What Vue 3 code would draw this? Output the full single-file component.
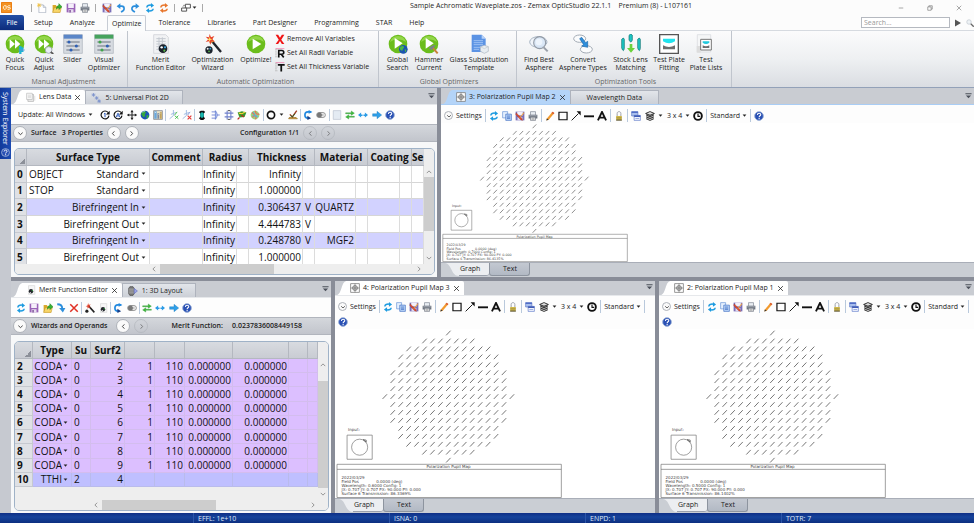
<script setup>
import { h } from 'vue'

const glyphs = {
  logo: '<rect width="16" height="16" rx="1" fill="#e8760c"/><rect x="1" y="1" width="14" height="14" fill="#f39325"/><path d="M7.5 5.5h-3l-1 1v3l1 1h2l1-1v-4M13.5 5.5h-3l-1 1v1l4 1v1l-1 1h-3" fill="none" stroke="#fff3dd" stroke-width="1.4"/>',
  file: '<path d="M3 3h7l4 4v8.500H3z" fill="#fff" stroke="#98a4b5"/><path d="M10 3v4h4" fill="none" stroke="#98a4b5"/><path d="M3 0v7M0 3.500h7M1 1l5 5M6 1L1 6" stroke="#f4c23c" stroke-width="1.200"/>',
  open: '<path d="M1 3h5l1.500 2H13v10H1z" fill="#d9a92c"/><path d="M1 15l3-8h11l-2 8z" fill="#f8d66a" stroke="#b98b1d" stroke-width=".7"/><path d="M7 10c0-4 2-6 4-6V1l5 5-5 4.500V7.500c-2 0-3 1-4 2.500z" fill="#35b233" stroke="#167a18" stroke-width=".8"/>',
  save: '<path d="M1 1h14v14H1z" fill="#9a63b8"/><path d="M3.500 1h9v7h-9z" fill="#f5effa"/><path d="M4 10h8v5H4z" fill="#e7dcef"/><path d="M5.500 11h2v4h-2z" fill="#6b3d8a"/>',
  saveAs: '<path d="M1 1h14v14H1z" fill="#7a6fb8"/><path d="M3.500 1h9v6h-9z" fill="#f3f0fa"/><path d="M4 10h8v5H4z" fill="#dcd7ef"/><path d="M2 3l9 9 1 3-3-1-8-9z" fill="#e04b2e" stroke="#8d2a18" stroke-width=".5"/><path d="M14 2L8 9l-1 2 2-1 6-7z" fill="#f3a33a"/>',
  print: '<path d="M4 1h8v6H4z" fill="#e9edf2" stroke="#777f8c"/><path d="M1 6h14v6H1z" fill="#6d747f"/><path d="M2 7h12v1.500H2z" fill="#aab0ba"/><path d="M4 10h8v5H4z" fill="#f4f6f8" stroke="#666d78"/><path d="M5.500 12h5M5.500 13.500h5" stroke="#999"/>',
  undo: '<path d="M4 5h5c3 0 4 2 4 4s-2 4-5 5.500" fill="none" stroke="#2d8fdc" stroke-width="2.600"/><path d="M1 5l6-4.500v9z" fill="#2d8fdc"/>',
  redo: '<path d="M12 5H7C4 5 3 7 3 9s2 4 5 5.500" fill="none" stroke="#2d8fdc" stroke-width="2.600"/><path d="M15 5L9 .5v9z" fill="#2d8fdc"/>',
  refresh: '<path d="M3 7c0-3 3-4 7-3.500" fill="none" stroke="#1d9be0" stroke-width="2.400"/><path d="M9.500 0l5 4-5 3.500z" fill="#1d9be0"/><path d="M13 9c0 3-3 4-7 3.500" fill="none" stroke="#1d9be0" stroke-width="2.400"/><path d="M6.500 16l-5-4 5-3.500z" fill="#1d9be0"/>',
  refreshAll: '<path d="M3 7c0-3 3-4 7-3.500" fill="none" stroke="#e8762c" stroke-width="2.400"/><path d="M9.500 0l5 4-5 3.500z" fill="#e8762c"/><path d="M13 9c0 3-3 4-7 3.500" fill="none" stroke="#e8762c" stroke-width="2.400"/><path d="M6.500 16l-5-4 5-3.500z" fill="#e8762c"/>',
  cascade: '<path d="M7 2h8v6H7z" fill="#fff" stroke="#555" stroke-width="1.600"/><path d="M1 8h8v5H1z" fill="#fff" stroke="#555" stroke-width="1.600"/><path d="M3 6l2-3 2 2" fill="none" stroke="#555"/>',
  caret: '<path d="M2 5h12l-6 7z" fill="#222"/>',
  chevDown: '<path d="M3 6l5 4.500L13 6" fill="none" stroke="#333" stroke-width="2"/>',
  chevLeft: '<path d="M10 3L5.500 8l4.500 5" fill="none" stroke="#333" stroke-width="2"/>',
  chevRight: '<path d="M6 3l4.500 5L6 13" fill="none" stroke="#333" stroke-width="2"/>',
  chevUp: '<path d="M2 11l6-6 6 6" fill="none" stroke="#777" stroke-width="2"/>',
  close: '<path d="M2.500 2.500l11 11M13.500 2.500l-11 11" stroke="#222" stroke-width="1.800"/>',
  stripMenu: '<path d="M1 3h14v2H1zM2 8h12l-6 6z" fill="#4b505a"/>',
  min: '<path d="M2 8h12" stroke="#666" stroke-width="1.500"/>',
  restore: '<path d="M2 5h9v9H2zM5 5V2h9v9h-3" fill="none" stroke="#666" stroke-width="1.500"/>',
  winClose: '<path d="M2 2l12 12M14 2L2 14" stroke="#666" stroke-width="1.500"/>',
  play: '<path d="M2 1l12 7-12 7z" fill="#555"/>',
  lens: '<circle cx="6" cy="6" r="4.500" fill="#eef2f5" stroke="#c3cad2" stroke-width="1.500"/><path d="M9.500 9.500l6 6" stroke="#666" stroke-width="2.500"/>',
  one: '<path d="M13 4A6.300 6.300 0 1 0 14.300 9" fill="none" stroke="#111" stroke-width="1.900"/><path d="M15.500 1v6h-6z" fill="#111"/><path d="M6.500 6.500L8 5v6.500" fill="none" stroke="#2857b8" stroke-width="1.600"/>',
  auto: '<path d="M13 4A6.300 6.300 0 1 0 14.300 9" fill="none" stroke="#111" stroke-width="1.900"/><path d="M15.500 1v6h-6z" fill="#111"/><path d="M5 11.500L8 5l3 6.500M6 9.500h4" fill="none" stroke="#2857b8" stroke-width="1.400"/>',
  move: '<path d="M8 1v14M1 8h14" stroke="#222" stroke-width="1.600"/><path d="M8 0l2.500 3.500h-5zM8 16l2.500-3.500h-5zM0 8l3.500-2.500v5zM16 8l-3.500-2.500v5z" fill="#222"/>',
  globe: '<circle cx="8" cy="8" r="7" fill="#1d55b5"/><path d="M3 4c3-3 5-2 7-1-1 3-3 3-2 5s-2 4-3 3-1-3-3-4zM11 8c2 0 3 1 3 2s-2 4-3 4 0-3-1-4z" fill="#36a83e"/><path d="M4 4c1-1 3-2 4-1.500" stroke="#bfe0ff" fill="none"/>',
  picture: '<path d="M1 1h14v14H1z" fill="#e8e2c8" stroke="#666c77"/><path d="M2 2h4v12H2z" fill="#6aa7dd"/><path d="M7 5h3v9H7z" fill="#7d8ba0"/><path d="M11 3h3v11h-3z" fill="#c2a35a"/><path d="M3 4h2M8 7h1M12 5h1" stroke="#fff"/>',
  axisGreen: '<path d="M7 0v9M1 14l6-5M3 7l8-3" stroke="#9db9e0" stroke-width="1.500"/><path d="M13 3l-4 5M9 9l6 5M15 9l-5 5" stroke="#44c04c" stroke-width="1.500"/>',
  axisRed: '<path d="M7 0v9M1 14l6-5M3 7l8-3" stroke="#9db9e0" stroke-width="1.500"/><path d="M13 3l-4 5" stroke="#8094d8" stroke-width="1.500"/><path d="M9 9l6 6M15 9l-6 6" stroke="#e23b38" stroke-width="1.800"/>',
  aperture: '<path d="M6 1h5l2 2-2 2v6l2 2-3 3H6l-3-3 2-2V5L3 3z" fill="#111"/><ellipse cx="8" cy="8" rx="3" ry="4.500" fill="#18b6ad"/>',
  rays: '<path d="M1 3h6M1 8h13M1 13h6" stroke="#7285d6" stroke-width="1.500"/><path d="M7 1q6 7 0 14z" fill="#c4d0f5" stroke="#4967c7"/>',
  frame: '<path d="M1 5h14M1 11h14M5 1v14M11 1v14" stroke="#6e7fca" stroke-width="1.700"/><path d="M6 1h4M6 15h4" stroke="#444" stroke-width="1.500"/>',
  surface3d: '<path d="M1 4l7-2 7 2-3 7-8 1z" fill="#39972c"/><path d="M3 5l5 1 5-3" stroke="#ffd836" stroke-width="1.800" fill="none"/><path d="M4 12l-3 3M7 8l4 3" stroke="#b62c22" stroke-width="2"/>',
  falseColor: '<circle cx="8" cy="8" r="7" fill="#9ed47a"/><path d="M3 4l4 3-3 5M8 1l2 5 5 1M9 15l1-5-4-1" stroke="#e76c5b" stroke-width="1.800" fill="none"/><path d="M5 3l6 9M13 10l-9-1" stroke="#4db6e6" stroke-width="1.500"/>',
  ring: '<circle cx="8" cy="8" r="5.800" fill="none" stroke="#111" stroke-width="2.600"/>',
  check: '<path d="M2 12h11l2 2H1z" fill="#d8a33a" stroke="#8d6516"/><path d="M3 7l4 4 7-10" fill="none" stroke="#a03a20" stroke-width="2.200"/><path d="M4 9l3 2 4-5" stroke="#226b2a" fill="none" stroke-width="1.500"/>',
  hook: '<path d="M13 3H8C4 3 3 5 3 8s2 5 5 5" fill="none" stroke="#2289e0" stroke-width="2.600"/><path d="M7 9l6 4-6 3z" fill="#173d85"/><path d="M9 0l6 3-6 3z" fill="#2289e0"/>',
  toggle: '<rect x="1" y="4" width="14" height="8" rx="4" fill="#f5f5f5" stroke="#777" stroke-width="1.200"/><circle cx="5.500" cy="8" r="4" fill="#777"/><path d="M11 6v4" stroke="#777"/>',
  sheet: '<path d="M2 1h12v14H2z" fill="#e4ebf3" stroke="#b3becb"/>',
  swap: '<path d="M1 4.500h9V1.500l5 3.500-5 3.500V6H1zM15 11.500H6v3L1 11l5-3.500V10h9z" fill="#3dbb3a" stroke="#23872a" stroke-width=".5"/>',
  spread: '<path d="M0 8l5-4v3h6V4l5 4-5 4V9.500H5V12z" fill="#2a9be6"/><path d="M8 6v4" stroke="#fff" stroke-width="1.500"/>',
  right: '<path d="M1 6h7V2l7.500 6L8 14v-4H1z" fill="#2f9fe8" stroke="#1775ba" stroke-width=".6"/>',
  help: '<circle cx="8" cy="8" r="7" fill="#2950b4" stroke="#9fb3d9" stroke-width="1.500"/><path d="M5.500 6.200c0-3.400 5.300-3.200 5.300-.4C10.800 7.700 8.200 7.600 8.200 9.800M8.200 11v2" fill="none" stroke="#fff" stroke-width="1.700"/>',
  copy: '<path d="M1 1h8v10H1z" fill="#e6f0fd" stroke="#5c8ad4"/><path d="M6 5h9v10H6z" fill="#b9d3f8" stroke="#3767bd"/><path d="M8 8h5M8 10h5M8 12h5" stroke="#3767bd"/>',
  pencil: '<path d="M3 12L12 1l3 2-9 11-4 1z" fill="#f29a2e"/><path d="M12 1l3 2-1.500 2-3-2z" fill="#d85b3a"/><path d="M3 12l3 2-4 1z" fill="#333"/>',
  rect: '<path d="M1.500 2h13v12h-13z" fill="none" stroke="#111" stroke-width="1.900"/>',
  arrow: '<path d="M1 15L12 4" stroke="#111" stroke-width="1.500"/><path d="M15.500.5v6.500L9 .5z" fill="#111"/>',
  line: '<path d="M0 8.500h16" stroke="#111" stroke-width="3"/>',
  letter: '<path d="M1.500 15L8 1.500 14.500 15M4 10.500h8" fill="none" stroke="#111" stroke-width="3"/>',
  lock: '<path d="M5 9V4c0-4 6-4 6 0v5" fill="none" stroke="#9da2aa" stroke-width="1.600"/><path d="M3.500 8h9v7h-9z" fill="#d0b848"/><path d="M3.500 11h9" stroke="#8a7c3a" stroke-width="1"/><path d="M3.500 14.500h9" stroke="#44423a" stroke-width="1.500"/>',
  clone: '<path d="M1 1h10v7H1z" fill="#aac0ee" stroke="#5572c5"/><path d="M1 1h10v2H1z" fill="#4763c1"/><path d="M5 7h10v8H5z" fill="#f2f5fd" stroke="#5572c5"/><path d="M5 7h10v2.500H5z" fill="#3552b0"/><path d="M7 12h6" stroke="#6d87d1"/>',
  layers: '<path d="M8 1l7 3-7 3-7-3zM2 6.500l6 2.500 6-2.500M2 9.500L8 12l6-2.500M2 12.500L8 15l6-2.500" fill="#fff" stroke="#222" stroke-width="1.500"/><path d="M2 4h12v9H2z" fill="#333" opacity=".35"/>',
  clock: '<circle cx="8" cy="8" r="6.200" fill="#fff" stroke="#111" stroke-width="3"/><path d="M8 4v4.500h3.500" fill="none" stroke="#111" stroke-width="1.800"/>',
  pageIcon: '<path d="M3 4h9v11H3z" fill="#eee" stroke="#a5a5a5"/><path d="M1 2h9v10H1z" fill="#fafafa" stroke="#b5b5b5"/><path d="M3 5h5M3 7h5M3 9h5" stroke="#ccc"/><path d="M12 5v10M14 6v8" stroke="#cfcfcf"/>',
  scatter: '<g stroke="#7d93cd" stroke-width="1.300"><path d="M4 0v6M1 3h6M2 1l4 4M6 1L2 5M9 5v6M6 8h6M7 6l4 4M11 6L7 10M13 10v6M10 13h6M11 11l4 4M15 11l-4 4"/></g>',
  pupil: '<path d="M1 1h14v14H1z" fill="#fff" stroke="#777" stroke-width="1.200"/><circle cx="8" cy="8" r="4" fill="#c9c9c9" stroke="#666"/><path d="M8 1v14M1 8h14" stroke="#666"/>',
  merit: '<path d="M4 1h10v14H4z" fill="#f6f6f6" stroke="#d4d4d4"/><circle cx="8" cy="10" r="3.500" fill="#23262c"/><circle cx="10" cy="9" r="1" fill="#39b14a"/><circle cx="7" cy="12" r="1" fill="#ddd"/>',
  layout3d: '<path d="M3 1h5l2 3v8l-2 3H3L1 12V4z" fill="#777" stroke="#444"/><path d="M1 5h9M1 8h14M1 11h9" stroke="#ccc"/><path d="M10 4l5 4-5 4z" fill="#9aa4e6" stroke="#6570c2"/>',
  insert: '<path d="M2 2c5 0 8 3 8 7" fill="none" stroke="#2d8fdc" stroke-width="3"/><path d="M5 8h10l-4 7z" fill="#2d8fdc"/>',
  del: '<path d="M2 2l12 12M14 2L2 14" stroke="#e03024" stroke-width="2.400"/>',
  wand: '<path d="M6 5l9 10" stroke="#222" stroke-width="2.400"/><path d="M5 0l1 3 3-1-2 3 2 3-3-1-2 2V6L1 5l3-1z" fill="#e0402b"/><circle cx="3" cy="13" r="2.500" fill="#222"/>',
  quickFocus: '<circle cx="15" cy="15" r="14" fill="#6bbd1c"/><path d="M3 12a12.500 12.500 0 0 1 24 0c-7-5-17-5-24 0" fill="#93d64a"/><path d="M7 8l8 7-8 7zM15 8l8 7-8 7z" fill="#fff"/><path d="M23 18v12M26 20v7" stroke="#1eb2d4" stroke-width="3.500"/><path d="M20 24h10" stroke="#6a8bd2"/>',
  quickAdjust: '<circle cx="15" cy="15" r="14" fill="#6bbd1c"/><path d="M3 12a12.500 12.500 0 0 1 24 0c-7-5-17-5-24 0" fill="#93d64a"/><path d="M7 8l8 7-8 7zM15 8l8 7-8 7z" fill="#fff"/><circle cx="22" cy="24" r="5" fill="#e9eef5" stroke="#a7adb6" stroke-width="1.500"/><path d="M25 27l4 3" stroke="#555" stroke-width="2.500"/>',
  slider: '<path d="M1 1h28v28H1z" fill="#d7dbe1" stroke="#a9b0ba"/><path d="M1 1h28v6H1z" fill="#5b86c8"/><path d="M5 12h20M5 18h20M5 24h20" stroke="#6c7480" stroke-width="1.800"/><circle cx="9" cy="12" r="2.300" fill="#2e5fb4"/><circle cx="20" cy="18" r="2.300" fill="#2e5fb4"/><circle cx="12" cy="24" r="2.300" fill="#2e5fb4"/>',
  visual: '<path d="M1 1h28v28H1z" fill="#d7dbe1" stroke="#a9b0ba"/><path d="M1 1h28v6H1z" fill="#46a35d"/><path d="M5 12h20M5 18h20M5 24h20" stroke="#6c7480" stroke-width="1.800"/><circle cx="9" cy="12" r="2.300" fill="#3fa648"/><circle cx="20" cy="18" r="2.300" fill="#2e5fb4"/><circle cx="12" cy="24" r="2.300" fill="#3fa648"/>',
  meritBig: '<path d="M4 1h18l4 4v24H4z" fill="#f1f2f4" stroke="#c8ccd2"/><path d="M8 7h14M8 11h14M8 15h14M8 19h14M8 23h14M12 5v20M17 5v20" stroke="#c3c8cf" stroke-width="1.500"/><circle cx="18" cy="22" r="6.500" fill="#1c232d"/><circle cx="16" cy="20" r="1.800" fill="#fff"/><circle cx="21" cy="20" r="1.600" fill="#3aa9e0"/><circle cx="20" cy="25" r="1.600" fill="#58b947"/>',
  wandBig: '<path d="M12 9l15 18" stroke="#20242c" stroke-width="3.500"/><path d="M11 7l4 5" stroke="#f3b13c" stroke-width="4"/><path d="M10 0l2 5 5-2-3 5 4 4-5-1-2 5-2-5-5 1 4-4-4-4 5 1z" fill="#e7442b"/><path d="M10 4l1 3 3 1-3 1-1 3-1-3-3-1 3-1z" fill="#ffe36b"/><circle cx="9" cy="24" r="5.500" fill="#1c232d"/><circle cx="7" cy="22" r="1.500" fill="#eee"/><circle cx="11" cy="22" r="1.400" fill="#3aa9e0"/><circle cx="9" cy="26" r="1.300" fill="#58b947"/>',
  optimize: '<circle cx="15" cy="15" r="14" fill="#6bbd1c"/><path d="M3 12a12.500 12.500 0 0 1 24 0c-7-5-17-5-24 0" fill="#93d64a"/><path d="M10 7l13 8-13 8z" fill="#fff"/>',
  globalSearch: '<circle cx="15" cy="15" r="14" fill="#6bbd1c"/><path d="M3 12a12.500 12.500 0 0 1 24 0c-7-5-17-5-24 0" fill="#93d64a"/><path d="M10 6l12 8-12 8z" fill="#fff"/><circle cx="23" cy="23" r="6.500" fill="#1c54b0"/><path d="M18 20c3-3 5-2 6-1s-2 3-2 5-3 1-4-1zM25 23c3 0 3 2 1 5z" fill="#46b54a"/>',
  hammer: '<circle cx="15" cy="15" r="14" fill="#6bbd1c"/><path d="M3 12a12.500 12.500 0 0 1 24 0c-7-5-17-5-24 0" fill="#93d64a"/><path d="M10 6l12 8-12 8z" fill="#fff"/><path d="M20 20l8 9" stroke="#c9803b" stroke-width="3"/><path d="M15 22c2-4 6-6 10-5l-6 7z" fill="#7b818a"/>',
  glass: '<path d="M4 1h15l6 6v20H4z" fill="#5b93e4"/><path d="M19 1v6h6z" fill="#b8d2f8"/><path d="M7 10h14M7 13h14M7 16h14M7 20h10M7 23h8" stroke="#9dc0f3" stroke-width="1.500"/><path d="M17 19l6-2 6 2v7l-6 3-6-3z" fill="#e8edf2" stroke="#aab4bf"/><path d="M17 19l6 3 6-3" fill="none" stroke="#c1c8cf"/>',
  findAsphere: '<ellipse cx="14" cy="12" rx="13" ry="8" fill="#f1f5fa" stroke="#a9b6c5" stroke-width="1.500"/><circle cx="16" cy="13" r="9" fill="#d4e3f5" fill-opacity=".8" stroke="#929aa5" stroke-width="1.700"/><circle cx="15" cy="12" r="5" fill="#edf4fc"/><path d="M22 20l6 6" stroke="#999fa8" stroke-width="3"/>',
  convert: '<ellipse cx="10" cy="7" rx="9" ry="5.500" fill="#fbfcfd" stroke="#a3abb5" stroke-width="1.500"/><ellipse cx="20" cy="23" rx="9" ry="5.500" fill="#fbfcfd" stroke="#a3abb5" stroke-width="1.500"/><path d="M10 7l3-2 6 8 3-2v9l-9-2 3-2z" fill="#2f8fdc" stroke="#1c67a8"/>',
  stock: '<path d="M1 8q3-4 4 0v13q-1 8-4 0zM25 8q3-4 4 0v13q-1 8-4 0z" fill="#1cc6c4" stroke="#12716f"/><path d="M12 2q3-4 5 0v7q-2 6-5 0z" fill="#1cc6c4" stroke="#12716f"/><path d="M13 15h4v6h4l-6 7-6-7h4z" fill="#6bd23c"/>',
  plate: '<path d="M1 1h28v28H1z" fill="#fff" stroke="#555" stroke-width="2"/><path d="M6 7h18v4q-9 6-18 0z" fill="#21e3ee"/><path d="M6 17q9 5 18 0v6H6z" fill="#6d6d6d"/>',
  plates: '<path d="M2 1h20v26H2z" fill="#f5f6f7" stroke="#d5d8dc"/><path d="M1 18h6v10H1z" fill="#ddd"/><path d="M7 8h16v16H7z" fill="#fff" stroke="#777" stroke-width="1.500"/><path d="M10 11h10v2q-5 4-10 0z" fill="#21c9dd"/><path d="M10 17q5 3 10 0v4H10z" fill="#6d6d6d"/>',
  removeAll: '<path d="M2 1h4l3 5 3-5h4l-5 8 5 7h-4l-3-5-3 5H2l5-7z" fill="#f01414" transform="translate(-1)"/>',
  radii: '<path d="M0 2h4M0 5h3M0 8h4M0 11h3M0 14h4" stroke="#aaa"/><path d="M1 1h14" stroke="#e48" stroke-width=".8"/><path d="M6 15V4h5q3 0 3 3t-3 3H7M10 10l4 5" fill="none" stroke="#111" stroke-width="2.600"/>',
  thick: '<path d="M0 2h4M0 5h3M0 8h4M0 11h3M0 14h4" stroke="#aaa"/><path d="M1 1h14" stroke="#e48" stroke-width=".8"/><path d="M4.500 4.500h11M10 4.500V15" fill="none" stroke="#111" stroke-width="2.800"/>'
}

const Icon = (props) =>
  h('svg', {
    class: 'icon',
    viewBox: props.big ? '0 0 30 30' : '0 0 16 16',
    'aria-hidden': 'true',
    innerHTML: glyphs[props.name]
  })
Icon.props = { name: String, big: Boolean }

const quickTools = [
  '|', ['file', 'New'], ['open', 'Open'], ['save', 'Save'], ['print', 'Print'], '|',
  ['saveAs', 'Save As'], ['undo', 'Undo'], ['redo', 'Redo'], ['refresh', 'Update'],
  ['refreshAll', 'Update All'], '|', ['cascade', 'Window Options'], '|'
]

const menus = ['File', 'Setup', 'Analyze', 'Optimize', 'Tolerance', 'Libraries', 'Part Designer', 'Programming', 'STAR', 'Help']

const ribbon = [
  {
    key: 'manual', label: 'Manual Adjustment',
    items: [['quickFocus', 'Quick', 'Focus'], ['quickAdjust', 'Quick', 'Adjust'], ['slider', 'Slider', ''], ['visual', 'Visual', 'Optimizer']]
  },
  {
    key: 'automatic', label: 'Automatic Optimization',
    items: [['meritBig', 'Merit', 'Function Editor'], ['wandBig', 'Optimization', 'Wizard'], ['optimize', 'Optimize!', '']],
    list: [['removeAll', 'Remove All Variables'], ['radii', 'Set All Radii Variable'], ['thick', 'Set All Thickness Variable']]
  },
  {
    key: 'global', label: 'Global Optimizers',
    items: [['globalSearch', 'Global', 'Search'], ['hammer', 'Hammer', 'Current'], ['glass', 'Glass Substitution', 'Template']]
  },
  {
    key: 'lens-tools-group', label: 'Optimization Tools',
    items: [['findAsphere', 'Find Best', 'Asphere'], ['convert', 'Convert', 'Asphere Types'], ['stock', 'Stock Lens', 'Matching'], ['plate', 'Test Plate', 'Fitting'], ['plates', 'Test', 'Plate Lists']]
  }
]

const lensTools = ['one', 'auto', 'move', 'globe', 'picture', '|', 'axisGreen', 'axisRed', '|', 'aperture', 'rays', 'frame', 'surface3d', 'falseColor', '|', 'ring', 'caret', 'check', '|', 'hook', 'toggle', '|', 'sheet', 'swap', 'spread', 'right', 'help']
const meritTools = ['refresh', 'save', 'open', 'insert', 'del', '|', 'wand', 'merit', '|', 'hook', 'toggle', '|', 'swap', 'spread', 'right', 'help']

const lensRows = [
  ['OBJECT', 'Standard', 'Infinity', '', ''],
  ['STOP', 'Standard', '1.000000', '', ''],
  ['', 'Birefringent In', '0.306437', 'V', 'QUARTZ'],
  ['', 'Birefringent Out', '4.444783', 'V', ''],
  ['', 'Birefringent In', '0.248780', 'V', 'MGF2'],
  ['', 'Birefringent Out', '1.000000', '', '']
]

const meritRows = [2, 3, 4, 5, 6, 7, 8, 9].map((n) => [n, 'CODA', '0', n, '1', '110', '0.000000', '0.000000'])
meritRows.push([10, 'TTHI', '2', 4, '', '', '', ''])

const upper = [{ id: 'map3', tab: '3: Polarization Pupil Map 2', other: 'Wavelength Data', wave: '0.7000', trans: '86.4135%' }]
const lower = [
  { id: 'map4', tab: '4: Polarization Pupil Map 3', wave: '0.6000', trans: '86.3369%' },
  { id: 'map2', tab: '2: Polarization Pupil Map 1', wave: '0.5000', trans: '86.1402%' }
]

const pitch = 7.9
const marks = []
for (let j = -8; j <= 8; j++) {
  for (let i = -8; i <= 8; i++) {
    if (i * i + j * j <= 64) marks.push(`M${(109.5 + i * pitch).toFixed(1)} ${(69.5 + j * pitch).toFixed(1)}l4.400-4.600`)
  }
}
const markPath = marks.join('')

const status = ['', 'EFFL: 1e+10', 'ISNA: 0', 'ENPD: 1', 'TOTR: 7']
</script>

<template>
  <div class="app">
    <header class="titlebar">
      <Icon name="logo" class="logo" />
      <div class="quick">
        <template v-for="(t, i) in quickTools" :key="i">
          <i v-if="t === '|'" class="sep"></i>
          <button v-else class="tool" :aria-label="t[1]"><Icon :name="t[0]" /><Icon v-if="t[0] === 'cascade'" name="caret" class="caret" /></button>
        </template>
      </div>
      <h1>Sample Achromatic Waveplate.zos - Zemax OpticStudio 22.1.1 &nbsp;&nbsp; Premium (8) - L107161</h1>
      <div class="window-controls">
        <button aria-label="Minimize"><Icon name="min" /></button>
        <button aria-label="Restore"><Icon name="restore" /></button>
        <button aria-label="Close"><Icon name="winClose" /></button>
      </div>
    </header>

    <nav class="menubar">
      <button v-for="m in menus" :key="m" class="menu" :class="{ file: m === 'File', active: m === 'Optimize' }">{{ m }}</button>
      <div class="search">
        <input type="search" placeholder="Search..." aria-label="Search" />
        <button aria-label="Next result"><Icon name="play" /></button>
        <button aria-label="Find"><Icon name="lens" /></button>
      </div>
    </nav>

    <section class="ribbon">
      <div v-for="g in ribbon" :key="g.key" class="group" :class="g.key">
        <div class="group-items">
          <button v-for="b in g.items" :key="b[0]" class="big">
            <Icon :name="b[0]" big />
            <span>{{ b[1] }}</span><span>{{ b[2] }}</span>
          </button>
          <div v-if="g.list" class="list">
            <button v-for="l in g.list" :key="l[0]"><Icon :name="l[0]" />{{ l[1] }}</button>
          </div>
        </div>
        <div class="group-label">{{ g.label }}</div>
      </div>
    </section>

    <main class="workspace">
      <aside class="rail">
        <button><span>System Explorer</span><Icon name="help" /></button>
      </aside>

      <div class="docks">
        <div class="dock-row upper">
          <section class="panel">
            <div class="strip">
              <button class="tab active">
                <svg class="slant" viewBox="0 0 10 14" preserveAspectRatio="none" aria-hidden="true"><path d="M0 14C5 13 4 0 10 0V14z" /></svg>
                <Icon name="pageIcon" />Lens Data<Icon name="close" class="close" />
              </button>
              <button class="tab"><Icon name="scatter" />5: Universal Plot 2D</button>
              <button class="strip-menu" aria-label="Window list"><Icon name="stripMenu" /></button>
            </div>
            <div class="toolbar editor">
              <label class="pick update"><select aria-label="Update"><option>Update: All Windows</option></select><Icon name="caret" class="caret" /></label>
              <div class="tools lens-tools">
                <template v-for="(t, i) in lensTools" :key="i">
                  <i v-if="t === '|'" class="sep"></i>
                  <button v-else class="tool" :aria-label="t"><Icon :name="t" :class="{ caret: t === 'caret' }" /></button>
                </template>
              </div>
            </div>
            <div class="props">
              <button class="round" aria-label="Expand"><Icon name="chevDown" /></button>
              <b>Surface &nbsp; 3 Properties</b>
              <button class="round" aria-label="Previous surface"><Icon name="chevLeft" /></button>
              <button class="round" aria-label="Next surface"><Icon name="chevRight" /></button>
              <b class="config">Configuration 1/1</b>
              <button class="round dim" aria-label="Previous configuration"><Icon name="chevLeft" /></button>
              <button class="round dim" aria-label="Next configuration"><Icon name="chevRight" /></button>
            </div>
            <div class="sheet-wrap">
              <div class="sheet">
                <div class="grid-area">
                  <table class="lens">
                    <colgroup><col class="c-num" /><col class="c-type" /><col class="c-comment" /><col class="c-rad" /><col class="c-flag" /><col class="c-thick" /><col class="c-flag" /><col class="c-mat" /><col class="c-flag" /><col class="c-coat" /><col class="c-flag" /><col class="c-flag" /></colgroup>
                    <thead>
                      <tr><th class="corner"></th><th>Surface Type</th><th>Comment</th><th colspan="2">Radius</th><th colspan="2">Thickness</th><th colspan="2">Material</th><th colspan="2">Coating</th><th class="cut">Se</th></tr>
                    </thead>
                    <tbody>
                      <tr v-for="(r, i) in lensRows" :key="i" :class="{ tint: i === 2 || i === 4 }">
                        <th scope="row">{{ i }}</th>
                        <td>
                          <div class="type-cell"><span>{{ r[0] }}</span><label class="pick"><select :aria-label="'Surface type ' + i"><option>{{ r[1] }}</option></select><Icon name="caret" class="caret" /></label></div>
                        </td>
                        <td></td><td>Infinity</td><td></td><td>{{ r[2] }}</td><td class="flag">{{ r[3] }}</td><td>{{ r[4] }}</td><td></td><td></td><td></td><td></td>
                      </tr>
                    </tbody>
                  </table>
                  <div class="vbar"><Icon name="chevUp" /><i class="thumb"></i><Icon name="chevUp" class="flip" /></div>
                </div>
                <div class="hbar lens-bar"><Icon name="chevUp" class="turn-left" /><i class="thumb"></i><Icon name="chevUp" class="turn-right" /></div>
              </div>
            </div>
          </section>
          <section v-for="m in upper" :key="m.id" class="panel">
            <div class="strip blue">
              <button class="tab active">
                <svg class="slant" viewBox="0 0 10 14" preserveAspectRatio="none" aria-hidden="true"><path d="M0 14C5 13 4 0 10 0V14z" /></svg>
                <Icon name="pupil" />{{ m.tab }}<Icon name="close" class="close" />
              </button>
              <button class="tab wide">{{ m.other }}</button>
              <button class="strip-menu" aria-label="Window list"><Icon name="stripMenu" /></button>
            </div>
            <div class="toolbar graph">
              <button class="settings"><span class="round small"><Icon name="chevDown" /></span>Settings</button>
              <i class="sep"></i>
              <button v-for="t in ['refresh', 'copy', 'saveAs', 'print']" :key="t" class="tool" :aria-label="t"><Icon :name="t" /></button>
              <i class="sep"></i>
              <button v-for="t in ['pencil', 'rect', 'arrow', 'line', 'letter']" :key="t" class="tool" :aria-label="t"><Icon :name="t" /></button>
              <i class="sep"></i>
              <button class="tool" aria-label="Lock"><Icon name="lock" /></button>
              <i class="sep"></i>
              <button class="tool" aria-label="Clone"><Icon name="clone" /></button>
              <button class="menu-tool" aria-label="Layers"><Icon name="layers" /><Icon name="caret" class="caret" /></button>
              <button class="menu-tool">3 x 4<Icon name="caret" class="caret" /></button>
              <button class="tool" aria-label="Reset"><Icon name="clock" /></button>
              <i class="sep"></i>
              <label class="pick"><select aria-label="Line style"><option>Standard</option></select><Icon name="caret" class="caret" /></label>
              <i class="sep"></i>
              <button class="tool" aria-label="Help"><Icon name="help" /></button>
            </div>
            <div class="plot">
              <svg viewBox="0 0 224 168" preserveAspectRatio="xMinYMax meet" role="img" aria-label="Polarization Pupil Map">
                <path :d="markPath" class="ink" />
                <text x="12" y="101">Input:</text>
                <path class="thin" d="M11 105.500h25v24H11z" /><circle class="thin" cx="23.500" cy="117.500" r="8" /><path class="ink" d="M27 110l3 2.500v-2z" />
                <path class="thin" d="M1 134.500h223v33H1zM1 139.500h223" />
                <text x="90" y="138.500">Polarization Pupil Map</text>
                <text x="5.500" y="149">2022/03/29</text>
                <text x="5.500" y="153">Field Pos</text><text x="40" y="153">0.0000 (deg)</text>
                <text x="5.500" y="157">Wavelength:  {{ m.wave }}  Config: 1</text>
                <text x="5.500" y="161">JX:  0.707 JY:  0.707 PX: 90.000 PY:   0.000</text>
                <text x="5.500" y="165.500">Surface 6 Transmission: {{ m.trans }}</text>
              </svg>
            </div>
            <div class="sheet-tabs">
              <button class="graph-tab"><svg class="slant" viewBox="0 0 14 14" preserveAspectRatio="none" aria-hidden="true"><path d="M0 0C7 1 6 14 14 14V0z" /></svg>Graph</button>
              <button class="text-tab">Text</button>
            </div>
          </section>
        </div>

        <div class="dock-row lower">
          <section class="panel">
            <div class="strip">
              <button class="tab active">
                <svg class="slant" viewBox="0 0 10 14" preserveAspectRatio="none" aria-hidden="true"><path d="M0 14C5 13 4 0 10 0V14z" /></svg>
                <Icon name="merit" />Merit Function Editor<Icon name="close" class="close" />
              </button>
              <button class="tab"><Icon name="layout3d" />1: 3D Layout</button>
              <button class="strip-menu" aria-label="Window list"><Icon name="stripMenu" /></button>
            </div>
            <div class="toolbar editor">
              <div class="tools merit-tools">
                <template v-for="(t, i) in meritTools" :key="i">
                  <i v-if="t === '|'" class="sep"></i>
                  <button v-else class="tool" :aria-label="t"><Icon :name="t" /></button>
                </template>
              </div>
            </div>
            <div class="props">
              <button class="round" aria-label="Expand"><Icon name="chevDown" /></button>
              <b class="wizards">Wizards and Operands</b>
              <button class="round" aria-label="Previous operand"><Icon name="chevLeft" /></button>
              <button class="round dim" aria-label="Next operand"><Icon name="chevRight" /></button>
              <b class="score">Merit Function:</b><b>0.0237836008449158</b>
            </div>
            <div class="sheet-wrap">
              <div class="sheet">
                <div class="grid-area">
                  <div class="table-box">
                    <table class="merit">
                      <colgroup><col class="m-num" /><col class="m-type" /><col class="m-su" /><col class="m-surf" /><col class="m-one" /><col class="m-one" /><col class="m-val" /><col class="m-val2" /><col class="m-su" /><col /></colgroup>
                      <thead>
                        <tr><th class="corner"></th><th>Type</th><th>Su</th><th>Surf2</th><th></th><th></th><th></th><th></th><th></th><th></th></tr>
                      </thead>
                      <tbody>
                        <tr v-for="r in meritRows" :key="r[0]" :class="r[1] === 'CODA' ? 'violet' : 'periwinkle'">
                          <th scope="row">{{ r[0] }}</th>
                          <td><label class="pick"><select :aria-label="'Operand ' + r[0]"><option>{{ r[1] }}</option></select><Icon name="caret" class="caret" /></label></td>
                          <td class="left">{{ r[2] }}</td><td>{{ r[3] }}</td><td>{{ r[4] }}</td><td>{{ r[5] }}</td><td>{{ r[6] }}</td><td>{{ r[7] }}</td><td></td><td></td>
                        </tr>
                      </tbody>
                    </table>
                  </div>
                  <div class="vbar merit-vbar"><Icon name="chevUp" /><i class="thumb"></i><Icon name="chevUp" class="flip" /></div>
                </div>
                <div class="hbar merit-bar"><Icon name="chevUp" class="turn-left" /><i class="thumb"></i><Icon name="chevUp" class="turn-right" /></div>
              </div>
            </div>
          </section>
          <section v-for="m in lower" :key="m.id" class="panel">
            <div class="strip short">
              <button class="tab active">
                <svg class="slant" viewBox="0 0 10 14" preserveAspectRatio="none" aria-hidden="true"><path d="M0 14C5 13 4 0 10 0V14z" /></svg>
                <Icon name="pupil" />{{ m.tab }}<Icon name="close" class="close" />
              </button>
              <button class="strip-menu" aria-label="Window list"><Icon name="stripMenu" /></button>
            </div>
            <div class="toolbar graph">
              <button class="settings"><span class="round small"><Icon name="chevDown" /></span>Settings</button>
              <i class="sep"></i>
              <button v-for="t in ['refresh', 'copy', 'saveAs', 'print']" :key="t" class="tool" :aria-label="t"><Icon :name="t" /></button>
              <i class="sep"></i>
              <button v-for="t in ['pencil', 'rect', 'arrow', 'line', 'letter']" :key="t" class="tool" :aria-label="t"><Icon :name="t" /></button>
              <i class="sep"></i>
              <button class="tool" aria-label="Lock"><Icon name="lock" /></button>
              <i class="sep"></i>
              <button class="tool" aria-label="Clone"><Icon name="clone" /></button>
              <button class="menu-tool" aria-label="Layers"><Icon name="layers" /><Icon name="caret" class="caret" /></button>
              <button class="menu-tool">3 x 4<Icon name="caret" class="caret" /></button>
              <button class="tool" aria-label="Reset"><Icon name="clock" /></button>
              <i class="sep"></i>
              <label class="pick"><select aria-label="Line style"><option>Standard</option></select><Icon name="caret" class="caret" /></label>
              <i class="sep"></i>
              <button class="tool" aria-label="Help"><Icon name="help" /></button>
            </div>
            <div class="plot">
              <svg viewBox="0 0 224 168" preserveAspectRatio="xMinYMax meet" role="img" aria-label="Polarization Pupil Map">
                <path :d="markPath" class="ink" />
                <text x="12" y="101">Input:</text>
                <path class="thin" d="M11 105.500h25v24H11z" /><circle class="thin" cx="23.500" cy="117.500" r="8" /><path class="ink" d="M27 110l3 2.500v-2z" />
                <path class="thin" d="M1 134.500h223v33H1zM1 139.500h223" />
                <text x="90" y="138.500">Polarization Pupil Map</text>
                <text x="5.500" y="149">2022/03/29</text>
                <text x="5.500" y="153">Field Pos</text><text x="40" y="153">0.0000 (deg)</text>
                <text x="5.500" y="157">Wavelength:  {{ m.wave }}  Config: 1</text>
                <text x="5.500" y="161">JX:  0.707 JY:  0.707 PX: 90.000 PY:   0.000</text>
                <text x="5.500" y="165.500">Surface 6 Transmission: {{ m.trans }}</text>
              </svg>
            </div>
            <div class="sheet-tabs">
              <button class="graph-tab"><svg class="slant" viewBox="0 0 14 14" preserveAspectRatio="none" aria-hidden="true"><path d="M0 0C7 1 6 14 14 14V0z" /></svg>Graph</button>
              <button class="text-tab">Text</button>
            </div>
          </section>
        </div>
      </div>
    </main>

    <footer class="status"><span v-for="(s, i) in status" :key="i">{{ s }}</span></footer>
  </div>
</template>

<style>
body { margin: 0; }
</style>

<style scoped>
.app { height: 100vh; min-height: 400px; display: flex; flex-direction: column; overflow: hidden; background: #fcfcfc; color: #1c1c1c; font: 7px/8px "Open Sans", "Noto Sans", sans-serif; }
.app * { box-sizing: border-box; }
button, select, input { font: inherit; color: inherit; background: none; border: 0; padding: 0; margin: 0; }
button { display: flex; align-items: center; white-space: nowrap; flex: none; }
select { appearance: none; outline: 0; }
.icon { width: 10px; height: 10px; flex: none; display: block; }
.icon.caret { width: 5px; height: 5px; }
.sep { width: 1px; height: 12px; background: #b9c9dc; flex: none; }
.pick { display: flex; align-items: center; gap: 2px; }

.titlebar { display: flex; height: 15px; flex: none; align-items: center; padding-left: 1px; }
.titlebar .logo { width: 11px; height: 11px; }
.quick { display: flex; align-items: center; justify-content: space-between; width: 174px; margin-left: 18px; }
.quick .sep { height: 8px; background: #aaa; margin: 0 1px; }
.quick .caret { margin-left: 1px; }
h1 { flex: 1; margin: 0; font-size: 7px; font-weight: 400; text-align: center; line-height: 12px; align-self: flex-start; }
.window-controls { display: flex; gap: 23px; padding-right: 12px; align-self: center; }
.window-controls .icon { width: 6px; height: 10px; }

.menubar { display: flex; gap: 1px; height: 16px; flex: none; align-items: stretch; border-bottom: 1px solid #d6dae0; }
.menu { padding: 0 8px; }
.menu.file { width: 24px; margin-right: 1px; padding: 0; justify-content: center; color: #fff; background: linear-gradient(#2450a6, #0c2c7c); border-radius: 0 2px 0 0; }
.menu.active { padding: 0 4px; margin: 0 3px -1px; border: 1px solid #c7ccd4; border-bottom: 0; border-radius: 2px 2px 0 0; background: #fbfcfc; }
.search { margin-left: auto; display: flex; align-items: center; gap: 4px; }
.search input { width: 89px; height: 11px; border: 1px solid #b5b9c0; padding: 0 2px; background: #fff; appearance: none; }
.search input::placeholder { color: #999; }
.search .icon { width: 8px; height: 8px; }

.ribbon { display: flex; height: 57px; flex: none; background: linear-gradient(#fbfbfc, #eef0f2 50%, #dadde2); border-bottom: 1px solid #93a1b8; }
.group { display: flex; flex-direction: column; padding-top: 3px; border-right: 1px solid #c0c5cd; }
.group-items { display: grid; flex: 1; align-items: start; }
.group-label { text-align: center; color: #666; height: 9px; }
.manual { width: 128px; }
.manual .group-items { grid-template-columns: 30px 28px 29px 34px; }
.automatic { width: 251px; padding-left: 5px; }
.automatic .group-items { grid-template-columns: 55px 49px 38px 1fr; }
.global { width: 138px; padding-left: 3px; }
.global .group-items { grid-template-columns: 31px 32px 68px; }
.lens-tools-group { width: 215px; padding-left: 3px; }
.lens-tools-group .group-items { grid-template-columns: 38px 50px 45px 32px 42px; }
.tools { display: flex; justify-content: space-between; align-items: center; }
.big { flex-direction: column; width: 100%; min-width: 0; }
.big .icon { width: 20px; height: 20px; margin-bottom: 2px; }
.list { display: flex; flex-direction: column; gap: 4px; }
.list button { gap: 2px; }

.workspace { flex: 1; min-height: 0; display: flex; }
.rail { width: 11px; flex: none; background: #c6c9d0; }
.rail button { width: 11px; padding: 4px 0 2px; flex-direction: column; gap: 3px; color: #fff; background: linear-gradient(90deg, #123a9a, #1c4bb2); }
.rail span { writing-mode: vertical-rl; line-height: 11px; }
.rail .icon { width: 9px; height: 9px; }
.docks { flex: 1; min-width: 0; display: grid; grid-template-rows: minmax(0, 189fr) minmax(0, 232fr); gap: 4px; background: #898d98; }
.dock-row { display: grid; gap: 4px; min-height: 0; }
.upper { grid-template-columns: minmax(0, 426fr) minmax(0, 533fr); }
.lower { grid-template-columns: minmax(0, 320fr) minmax(0, 320fr) minmax(0, 315fr); }
.panel { display: flex; flex-direction: column; min-width: 0; min-height: 0; background: #f7f8f9; overflow: hidden; }

.strip { display: flex; height: 17px; flex: none; align-items: flex-end; background: #c9ccd2; border-bottom: 1px solid #e6e8eb; padding-left: 2px; }
.strip.short { height: 15px; }
.tab { height: 14px; gap: 4px; padding: 0 13px 0 5px; background: linear-gradient(#e2e5ea, #ccd0d7); border: 1px solid #aeb3bd; border-bottom: 0; }
.tab.active { position: relative; background: #fff; padding: 0 4px; margin-left: 9px; gap: 3px; border: 0; border-radius: 0 2px 0 0; }
.tab.active > .slant { position: absolute; left: -9px; top: 0; width: 10px; height: 14px; fill: #fff; }
.tab .close { width: 7px; height: 7px; }
.tab.wide { padding: 0 16px; }
.blue { border-bottom-color: #a9cdf5; }
.blue .tab.active { background: #b4d4f8; }
.blue .tab.active > .slant { fill: #b4d4f8; }
.strip-menu { margin-left: auto; padding: 0 2px 5px; }
.strip-menu .icon { width: 7px; height: 7px; }

.toolbar { display: flex; align-items: center; flex: none; background: #fdfdfd; }
.editor { height: 19px; padding-left: 5px; gap: 7px; }
.update { padding-left: 2px; }
.lens-tools { width: 295px; }
.merit-tools { width: 176px; }
.tools .sep { margin: 0 -1px; }
.graph { flex-wrap: wrap; padding: 3px 0 0 3px; column-gap: 3px; row-gap: 0; }
.graph > * { height: 15px; }
.graph .sep { height: 13px; margin: 1px 0; }
.settings { gap: 3px; }
.menu-tool { gap: 3px; margin-left: 1px; }

.props { display: flex; align-items: center; gap: 4px; height: 18px; flex: none; padding-left: 2px; background: linear-gradient(#d4d7dc, #c2c5cc); border: solid #b1b5bd; border-width: 1px 0; }
.round { width: 14px; height: 14px; border: 1px solid #aeb2b9; border-radius: 50%; background: #fafafa; justify-content: center; }
.round .icon { width: 7px; height: 7px; }
.round.dim { background: none; opacity: 0.6; }
.round.small { display: flex; align-items: center; width: 9px; height: 9px; }
.round.small .icon { width: 6px; height: 6px; }
.props b { font-weight: 600; white-space: nowrap; }
.config { margin-left: auto; }
.config + .round + .round { margin-right: 102px; }
.wizards { margin-right: 5px; }
.score { margin-left: 19px; margin-right: 5px; }

.sheet-wrap { flex: 1; min-height: 0; padding: 6px 2px 2px 3px; display: flex; }
.sheet { flex: 1; min-width: 0; display: flex; flex-direction: column; border: 1px solid #9fb2c7; border-radius: 5px; overflow: hidden; background: #eee; }
.grid-area { flex: 1; min-height: 0; display: flex; overflow: hidden; }
.grid-area > table, .table-box { flex: 1; min-width: 0; }
table { table-layout: fixed; border-collapse: separate; border-spacing: 0; font-size: 10px; line-height: 12px; color: #111; }
.lens { height: 117px; width: 0; }
.merit { height: 145px; width: 100%; }
th, td { padding: 0; white-space: nowrap; overflow: hidden; border-right: 1px solid #dcdcdc; border-bottom: 1px solid #d6d6d6; }
thead th { height: 17px; background: linear-gradient(#d8dbe0, #c9ccd3); border-color: #b4b8c0; font-weight: 700; }
thead .cut { text-align: left; border-right: 0; }
thead .corner { background: linear-gradient(135deg, transparent 50%, #8c9099 50%) right 1px bottom 1px / 6px 6px no-repeat, linear-gradient(#d8dbe0, #c9ccd3); }
tbody th { background: #dfe1e5; text-align: left; padding-left: 2px; border-color: #c6c9cf; }
td { text-align: right; padding-right: 1px; background: #fff; }
td.flag { text-align: center; }
td.left { text-align: left; padding-left: 2px; }
td .pick { justify-content: flex-end; padding-right: 2px; }
.merit .pick { gap: 1px; }
td select { text-align-last: right; height: 12px; }
.type-cell { display: flex; justify-content: space-between; padding-left: 2px; }
.tint td { background: #d2d2ff; }
.violet td { background: #dcbfff; border-color: #d3bdee; }
.periwinkle td { background: #bfbfff; border-color: #b9bbec; }
.c-num { width: 12px; }
.c-type { width: 123px; }
.c-comment { width: 53px; }
.c-rad { width: 34px; }
.c-flag { width: 12px; }
.c-thick { width: 54px; }
.c-mat { width: 41px; }
.c-coat { width: 32px; }
.m-num { width: 18px; }
.m-type { width: 39px; }
.m-su { width: 19px; }
.m-surf { width: 34px; }
.m-one { width: 30px; }
.m-val { width: 48px; }
.m-val2 { width: 56px; }

.vbar { width: 10px; flex: none; display: flex; flex-direction: column; align-items: center; padding: 20px 0 3px; background: #eee; }
.vbar .icon, .hbar .icon { width: 6px; height: 6px; }
.vbar .thumb { width: 10px; height: 54px; margin-top: 2px; background: #cdcdcd; }
.vbar .flip { margin-top: auto; }
.flip { transform: rotate(180deg); }
.merit-vbar .thumb { height: auto; flex: 1; margin: 13px 0 3px; }
.hbar { display: flex; align-items: center; height: 10px; flex: none; background: #eee; }
.hbar .thumb { height: 10px; background: #cdcdcd; margin-left: 3px; width: 114px; }
.lens-bar { padding: 0 12px 0 136px; }
.merit-bar { padding: 0 12px 0 78px; }
.turn-left { transform: rotate(-90deg); }
.turn-right { transform: rotate(90deg); margin-left: auto; }

.plot { flex: 1; min-height: 0; padding-left: 1px; background: #fff; }
.plot svg { display: block; width: 100%; height: 100%; }
.plot text { font: 4px "DejaVu Sans", sans-serif; fill: #444; white-space: pre; }
.ink { fill: none; stroke: #555; stroke-width: 0.8; }
.thin { fill: none; stroke: #777; stroke-width: 0.7; }
.sheet-tabs { display: flex; align-items: flex-start; height: 15px; flex: none; padding-left: 4px; background: #caced4; border-top: 1px solid #a9aeb8; }
.graph-tab { position: relative; height: 13px; margin-left: 13px; padding: 0 9px 0 2px; background: #eceef1; border-bottom: 1px solid #9ba1ac; border-radius: 0 0 3px 0; }
.graph-tab .slant { position: absolute; left: -13px; top: 0; width: 14px; height: 13px; fill: #eceef1; }
.text-tab { height: 13px; width: 41px; justify-content: center; background: linear-gradient(#c3c8d1, #b2b9c4); border: solid #8d949f; border-width: 0 1px 1px; border-radius: 0 0 3px 3px; }

.status { height: 10px; flex: none; display: grid; grid-template-columns: 193fr 196fr 196fr 196fr 193fr; color: #dfe7f7; line-height: 12px; background: linear-gradient(#0f2f86, #16439b 40%, #0d2f80); }
.status span { padding-left: 4px; overflow: hidden; white-space: nowrap; }
.status span + span { border-left: 1px solid #2c55a8; }
</style>
